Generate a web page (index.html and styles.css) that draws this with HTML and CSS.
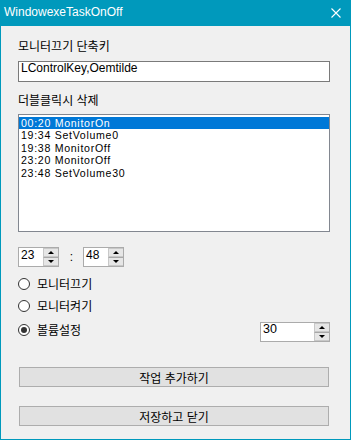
FILE: index.html
```html
<!DOCTYPE html>
<html lang="ko">
<head>
    <meta charset="UTF-8">
    <title>WindowexeTaskOnOff</title>
    <link rel="stylesheet" href="styles.css">
</head>
<body>
    <div class="window">
        <div class="titlebar">
            <span class="title">WindowexeTaskOnOff</span>
            <svg class="close" viewBox="0 0 10 10" width="10" height="10">
                <path d="M0.5 0.5L9.5 9.5M9.5 0.5L0.5 9.5" stroke="#fff" stroke-width="1.1" fill="none"/>
            </svg>
        </div>
        <div class="client">
            <div class="label label-first">모니터끄기 단축키</div>
            <div class="textbox">LControlKey,Oemtilde</div>

            <div class="label label-list">더블클릭시 삭제</div>
            <ul class="listbox">
                <li class="selected">00:20 MonitorOn</li>
                <li>19:34 SetVolume0</li>
                <li>19:38 MonitorOff</li>
                <li>23:20 MonitorOff</li>
                <li>23:48 SetVolume30</li>
            </ul>

            <div class="time-row">
                <div class="spin">
                    <span class="spin-value">23</span>
                    <div class="spin-buttons">
                        <span class="spin-up"></span>
                        <span class="spin-down"></span>
                    </div>
                </div>
                <span class="colon">:</span>
                <div class="spin">
                    <span class="spin-value">48</span>
                    <div class="spin-buttons">
                        <span class="spin-up"></span>
                        <span class="spin-down"></span>
                    </div>
                </div>
            </div>

            <div class="radio radio-first">
                <span class="radio-dot"></span>
                <span class="radio-text">모니터끄기</span>
            </div>
            <div class="radio radio-second">
                <span class="radio-dot"></span>
                <span class="radio-text">모니터켜기</span>
            </div>
            <div class="volume-row">
                <div class="radio radio-third">
                    <span class="radio-dot checked"></span>
                    <span class="radio-text">볼륨설정</span>
                </div>
                <div class="spin spin-volume">
                    <span class="spin-value">30</span>
                    <div class="spin-buttons">
                        <span class="spin-up"></span>
                        <span class="spin-down"></span>
                    </div>
                </div>
            </div>

            <button class="btn btn-add">작업 추가하기</button>
            <button class="btn btn-save">저장하고 닫기</button>
        </div>
    </div>
</body>
</html>
```

FILE: styles.css
```css
body {
    margin: 0;
    background-color: #F0F0F0;
    font-family: "Liberation Sans", "Noto Sans CJK KR", sans-serif;
    font-size: 12px;
    color: #000;
}

.window {
    width: 351px;
    height: 440px;
    box-sizing: border-box;
    border: 1px solid #0099BC;
    background-color: #F0F0F0;
}

.titlebar {
    height: 25px;
    background-color: #0099BC;
    color: #fff;
    display: flex;
    justify-content: space-between;
    align-items: flex-start;
    padding: 0 9px 0 3px;
}
.title {
    font-family: "Liberation Sans", sans-serif;
    font-size: 12px;
    line-height: 14px;
    padding-top: 4px;
}
.close {
    margin-top: 7px;
}

.client {
    padding: 0 20px 0 17px;
}

.label {
    font-family: "Noto Sans CJK KR", sans-serif;
    font-size: 12px;
    line-height: 15px;
}
.label-first {
    padding-top: 12px;
}
.label-list {
    margin-top: 10px;
}

.textbox {
    margin-top: 8px;
    height: 21px;
    box-sizing: border-box;
    border: 1px solid #7A7A7A;
    background-color: #fff;
    padding: 0 2px;
    line-height: 13px;
}

.listbox {
    list-style: none;
    margin: 7px 0 0 0;
    padding: 2px 0 0 0;
    height: 118px;
    box-sizing: border-box;
    border: 1px solid #828790;
    background-color: #fff;
    font-size: 10.6px;
    letter-spacing: 0.7px;
}
.listbox li {
    line-height: 12.4px;
    height: 12.4px;
    padding-left: 2px;
}
.listbox li.selected {
    background-color: #0078D7;
    color: #fff;
}

.time-row {
    margin-top: 15px;
    display: flex;
    align-items: flex-start;
}
.colon {
    width: 24px;
    text-align: center;
    line-height: 20px;
    padding-left: 1px;
    box-sizing: border-box;
}

.spin {
    width: 41px;
    height: 20px;
    box-sizing: border-box;
    border: 1px solid #ABABAB;
    background-color: #fff;
    display: flex;
    justify-content: space-between;
}
.spin-value {
    padding-left: 2px;
    line-height: 14px;
}
.spin-buttons {
    width: 15px;
    display: flex;
    flex-direction: column;
}
.spin-up,
.spin-down {
    flex: 1;
    position: relative;
    background-color: #E6E6E6;
    border: 1px solid #C8C8C8;
    border-right: none;
}
.spin-down {
    border-top: 1px solid #A8A8A8;
}
.spin-up::after,
.spin-down::after {
    content: "";
    position: absolute;
    left: 4px;
    border-left: 3px solid transparent;
    border-right: 3px solid transparent;
}
.spin-up::after {
    top: 2px;
    border-bottom: 3px solid #000;
}
.spin-down::after {
    top: 2px;
    border-top: 3px solid #000;
}

.spin-volume {
    width: 70px;
    margin-left: auto;
}
.spin-volume .spin-value {
    line-height: 12px;
    font-size: 12.5px;
}

.radio {
    display: flex;
    align-items: center;
    height: 13px;
}
.radio-first {
    margin-top: 10px;
}
.radio-second {
    margin-top: 9px;
}
.radio-third {
    margin-top: 1px;
}
.radio-dot {
    width: 12px;
    height: 12px;
    box-sizing: border-box;
    border: 1px solid #333;
    border-radius: 50%;
    background-color: #fff;
    display: flex;
    justify-content: center;
    align-items: center;
}
.radio-dot.checked::after {
    content: "";
    width: 6px;
    height: 6px;
    border-radius: 50%;
    background-color: #333;
}
.radio-text {
    font-family: "Noto Sans CJK KR", sans-serif;
    line-height: 13px;
    margin-left: 7px;
}

.volume-row {
    margin-top: 10px;
    display: flex;
    align-items: flex-start;
}

.btn {
    display: block;
    width: 310px;
    height: 20px;
    margin-left: 1px;
    padding: 0;
    box-sizing: border-box;
    border: 1px solid #ADADAD;
    background-color: #E1E1E1;
    font-family: "Noto Sans CJK KR", sans-serif;
    font-size: 12px;
    line-height: 15px;
    color: #000;
}
.btn-add {
    margin-top: 25px;
}
.btn-save {
    margin-top: 19px;
}
```
